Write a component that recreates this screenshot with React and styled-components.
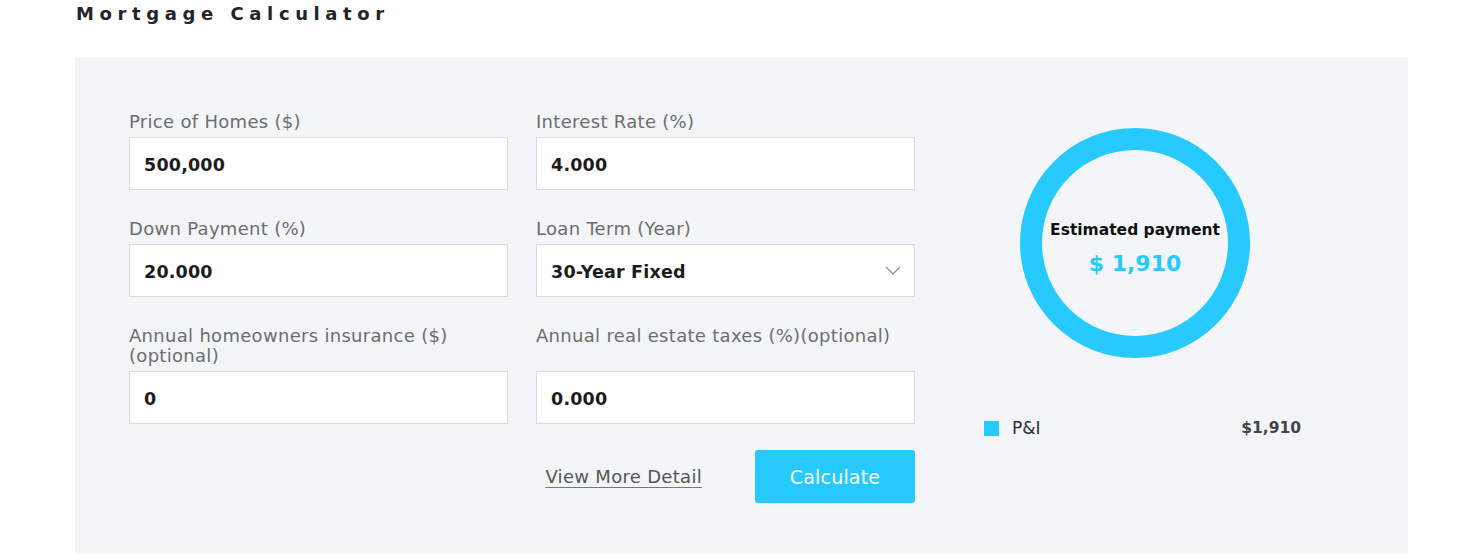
import React from "react";
import styled, { createGlobalStyle } from "styled-components";

const Global = createGlobalStyle`
  html, body { margin: 0; padding: 0; background: #ffffff; }
  body { font-family: "DejaVu Sans", "Liberation Sans", sans-serif; }
  * { box-sizing: border-box; }
`;

const CYAN = "#26cafe";

const Page = styled.div`
  padding: 0 74px 0 75px;
`;

const Title = styled.h1`
  margin: 0 0 29px 1px;
  height: 28px;
  line-height: 28px;
  font-size: 18px;
  font-weight: 700;
  letter-spacing: 5.6px;
  color: #222528;
`;

const Panel = styled.section`
  background: #f4f5f9;
  display: flex;
  align-items: flex-start;
  padding: 55px 54px 50px 54px;
`;

const Form = styled.div`
  display: grid;
  grid-template-columns: 379px 379px;
  column-gap: 28px;
  row-gap: 29px;
`;

const Field = styled.label`
  display: flex;
  flex-direction: column;
`;

const Label = styled.span`
  flex: 1;
  font-size: 18px;
  letter-spacing: 0.3px;
  line-height: 20px;
  color: #6d6d6d;
  margin-bottom: 5px;
`;

const InputBox = styled.div`
  position: relative;
  height: 53px;
  background: #ffffff;
  border: 1px solid #dadbdd;
  display: flex;
  align-items: center;
  padding: 3px 14px 0;
  font-size: 17.5px;
  letter-spacing: 0.2px;
  font-weight: 700;
  color: #1c1c1c;
`;

const Chevron = styled.svg`
  position: absolute;
  right: 13px;
  top: 50%;
  margin-top: -5px;
`;

const Actions = styled.div`
  grid-column: 1 / span 2;
  display: flex;
  justify-content: flex-end;
  align-items: center;
  gap: 53px;
  margin-top: -3px;
`;

const Link = styled.a`
  font-size: 18px;
  letter-spacing: 0.3px;
  color: #555555;
  text-decoration: underline;
  text-underline-offset: 4px;
  text-decoration-color: #777;
  cursor: pointer;
`;

const Button = styled.button`
  width: 160px;
  height: 53px;
  border: none;
  border-radius: 3px;
  background: ${CYAN};
  color: #ffffff;
  font-family: inherit;
  font-size: 19px;
  letter-spacing: 0.2px;
  cursor: pointer;
`;

const Summary = styled.div`
  margin-left: 69px;
  width: 317px;
  display: flex;
  flex-direction: column;
`;

const Donut = styled.div`
  position: relative;
  width: 230px;
  height: 230px;
  margin: 16px 0 0 36px;
`;

const DonutText = styled.div`
  position: absolute;
  inset: 0;
  display: flex;
  flex-direction: column;
  align-items: center;
  justify-content: center;
  gap: 8px;
  padding-top: 12px;
`;

const DonutLabel = styled.div`
  font-size: 15.5px;
  font-weight: 700;
  color: #111111;
  line-height: 22px;
`;

const DonutValue = styled.div`
  font-size: 22px;
  font-weight: 700;
  color: ${CYAN};
  line-height: 30px;
`;

const Legend = styled.div`
  margin-top: 60px;
  display: flex;
  align-items: center;
  font-size: 17px;
`;

const Swatch = styled.span`
  width: 15px;
  height: 15px;
  background: ${CYAN};
  margin-right: 13px;
`;

const LegendName = styled.span`
  flex: 1;
  color: #2a2d3a;
`;

const LegendValue = styled.span`
  font-size: 15.5px;
  font-weight: 700;
  color: #444444;
`;

const fields = [
  { label: "Price of Homes ($)", value: "500,000" },
  { label: "Interest Rate (%)", value: "4.000" },
  { label: "Down Payment (%)", value: "20.000" },
  { label: "Loan Term (Year)", value: "30-Year Fixed", select: true },
  { label: "Annual homeowners insurance ($) (optional)", value: "0" },
  { label: "Annual real estate taxes (%)(optional)", value: "0.000" },
];

export default function App() {
  return (
    <>
      <Global />
      <Page>
        <Title>Mortgage Calculator</Title>
        <Panel>
          <Form>
            {fields.map((f) => (
              <Field key={f.label}>
                <Label>{f.label}</Label>
                <InputBox>
                  {f.value}
                  {f.select && (
                    <Chevron width="16" height="9" viewBox="0 0 16 9">
                      <path d="M1 1l7 7 7-7" fill="none" stroke="#8a8a8a" strokeWidth="1.2" />
                    </Chevron>
                  )}
                </InputBox>
              </Field>
            ))}
            <Actions>
              <Link>View More Detail</Link>
              <Button>Calculate</Button>
            </Actions>
          </Form>
          <Summary>
            <Donut>
              <svg width="230" height="230" viewBox="0 0 230 230">
                <circle cx="115" cy="115" r="104" fill="none" stroke={CYAN} strokeWidth="22" />
              </svg>
              <DonutText>
                <DonutLabel>Estimated payment</DonutLabel>
                <DonutValue>$ 1,910</DonutValue>
              </DonutText>
            </Donut>
            <Legend>
              <Swatch />
              <LegendName>P&amp;I</LegendName>
              <LegendValue>$1,910</LegendValue>
            </Legend>
          </Summary>
        </Panel>
      </Page>
    </>
  );
}
